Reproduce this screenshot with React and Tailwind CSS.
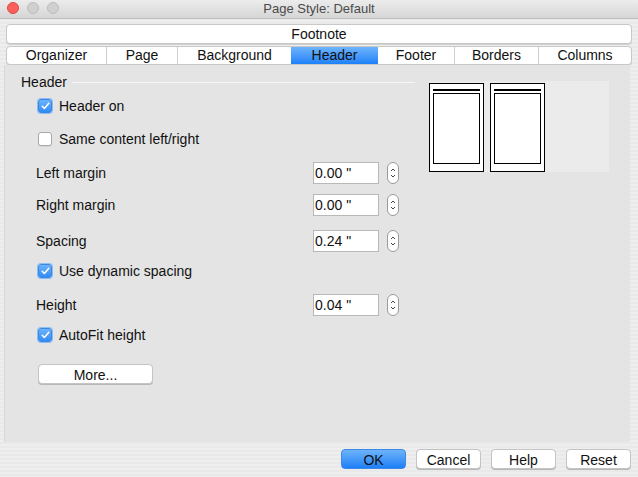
const stripes =
  "bg-[repeating-linear-gradient(180deg,#eeeeee_0px,#eeeeee_2px,#e9e9e9_2px,#e9e9e9_4px)]"

const Check = ({ on }) =>
  on ? (
    <span className="flex w-[14px] h-[14px] items-center justify-center rounded-[3px] bg-gradient-to-b from-[#6cb4fb] to-[#2f8cf5] border border-[#3b86e0] shadow-[0_0_0_1px_#8dbdf5]">
      <svg width="9" height="8" viewBox="0 0 9 8">
        <path d="M1.2 4.2 L3.4 6.4 L7.8 1.2" fill="none" stroke="#fff" strokeWidth="1.5" strokeLinecap="round" strokeLinejoin="round" />
      </svg>
    </span>
  ) : (
    <span className="block w-[14px] h-[14px] rounded-[3px] bg-white border border-[#a9a9a9] shadow-[0_1px_0_#d4d4d4]"></span>
  )

const CheckRow = ({ on, label, className }) => (
  <div className={`flex items-center h-[22px] pl-[33px] ${className}`}>
    <Check on={on} />
    <span className="ml-[7px]">{label}</span>
  </div>
)

const Spin = () => (
  <div className="flex flex-col items-center justify-center w-[12px] h-[22px] rounded-full border border-[#9a9a9a] bg-white">
    <svg width="8" height="16" viewBox="0 0 8 16">
      <path d="M2 6 L4 4 L6 6" fill="none" stroke="#444" strokeWidth="1" />
      <path d="M2 10 L4 12 L6 10" fill="none" stroke="#444" strokeWidth="1" />
    </svg>
  </div>
)

const FieldRow = ({ label, value, className }) => (
  <div className={`flex items-center h-[22px] pl-[31px] ${className}`}>
    <span className="w-[277px]">{label}</span>
    <div className="w-[66px] h-[22px] bg-white border border-[#b8b8b8] pl-[1px] flex items-center">
      {value}
    </div>
    <div className="ml-[8px]">
      <Spin />
    </div>
  </div>
)

const Page = () => (
  <div className="w-[55px] h-[89px] bg-white border-[1.5px] border-black px-[3px] pt-[5px]">
    <div className="h-[2px] bg-black"></div>
    <div className="mt-[2px] h-[71px] border-[1.5px] border-black"></div>
  </div>
)

const tabs = [
  ["Organizer", 99],
  ["Page", 71],
  ["Background", 114],
  ["Header", 87],
  ["Footer", 76],
  ["Borders", 84],
  ["Columns", 93],
]

const Btn = ({ children, primary }) => (
  <button
    className={
      primary
        ? "w-[65px] h-[20px] rounded-[4px] bg-gradient-to-b from-[#6cb3fa] to-[#1b7ff7] text-[#111] border border-[#3d87e6]"
        : "w-[65px] h-[20px] rounded-[4px] bg-white border border-[#c4c4c4] shadow-[0_1px_0_#b8b8b8] text-[#111]"
    }
  >
    {children}
  </button>
)

export default function App() {
  return (
    <div
      className={`w-[638px] h-[477px] overflow-hidden flex flex-col text-[14px] text-[#111] ${stripes}`}
      style={{ fontFamily: '"Liberation Sans", Arial, sans-serif' }}
    >
      {/* Title bar */}
      <div className="relative h-[19px] flex items-center justify-center bg-gradient-to-b from-[#ececec] to-[#d6d6d6] border-b border-[#bdbdbd] text-[13px] text-[#4a4a4a]">
        <div className="absolute left-[7px] top-[2px] flex gap-[8px]">
          <span className="w-[12px] h-[12px] rounded-full bg-[#fc605c] border border-[#de4a44]"></span>
          <span className="w-[12px] h-[12px] rounded-full bg-[#d0d0d0] border border-[#bcbcbc]"></span>
          <span className="w-[12px] h-[12px] rounded-full bg-[#d0d0d0] border border-[#bcbcbc]"></span>
        </div>
        Page Style: Default
      </div>

      {/* Tabs */}
      <div className="px-[6px] pt-[5px]">
        <div className="h-[20px] rounded-[4px] bg-white border border-[#c8c8c8] shadow-[0_1px_0_#d0d0d0] flex items-center justify-center">
          Footnote
        </div>
        <div className="mt-[2px] h-[19px] rounded-[4px] bg-white border border-[#c8c8c8] shadow-[0_1px_0_#d0d0d0] flex overflow-hidden">
          {tabs.map(([t, w], i) => (
            <div
              key={t}
              style={{ width: w }}
              className={`flex items-center justify-center ${
                t === "Header"
                  ? "bg-gradient-to-b from-[#6db4fb] to-[#1a80f8]"
                  : i > 0 && t !== "Footer"
                  ? "border-l border-[#cfcfcf]"
                  : ""
              }`}
            >
              {t}
            </div>
          ))}
        </div>
      </div>

      {/* Panel */}
      <div className="ml-[4px] w-[626px] h-[377px] bg-[#e4e4e4] border-l border-[#d8d8d8] flex">
        <div className="w-[410px] pt-[9px]">
          <div className="flex items-center h-[16px] pl-[16px]">
            <span>Header</span>
            <div className="ml-[5px] flex-1 h-px bg-[#cfcfcf] border-b border-[#f6f6f6]"></div>
          </div>
          <CheckRow on label="Header on" className="mt-[5px]" />
          <CheckRow label="Same content left/right" className="mt-[11px]" />
          <FieldRow label="Left margin" value={'0.00 "'} className="mt-[12px]" />
          <FieldRow label="Right margin" value={'0.00 "'} className="mt-[10px]" />
          <FieldRow label="Spacing" value={'0.24 "'} className="mt-[14px]" />
          <CheckRow on label="Use dynamic spacing" className="mt-[8px]" />
          <FieldRow label="Height" value={'0.04 "'} className="mt-[12px]" />
          <CheckRow on label="AutoFit height" className="mt-[8px]" />
          <div className="pl-[33px] mt-[18px]">
            <button className="w-[115px] h-[20px] rounded-[4px] bg-white border border-[#c4c4c4] shadow-[0_1px_0_#b8b8b8]">
              More...
            </button>
          </div>
        </div>
        <div className="ml-[14px] mt-[16px] w-[180px] h-[91px] bg-[#ebebeb] flex gap-[6px] items-start pt-[2px]">
          <Page />
          <Page />
        </div>
      </div>

      {/* Buttons */}
      <div className="mt-[7px] flex justify-end gap-[10px] pr-[7px]">
        <Btn primary>OK</Btn>
        <Btn>Cancel</Btn>
        <Btn>Help</Btn>
        <Btn>Reset</Btn>
      </div>
    </div>
  )
}
